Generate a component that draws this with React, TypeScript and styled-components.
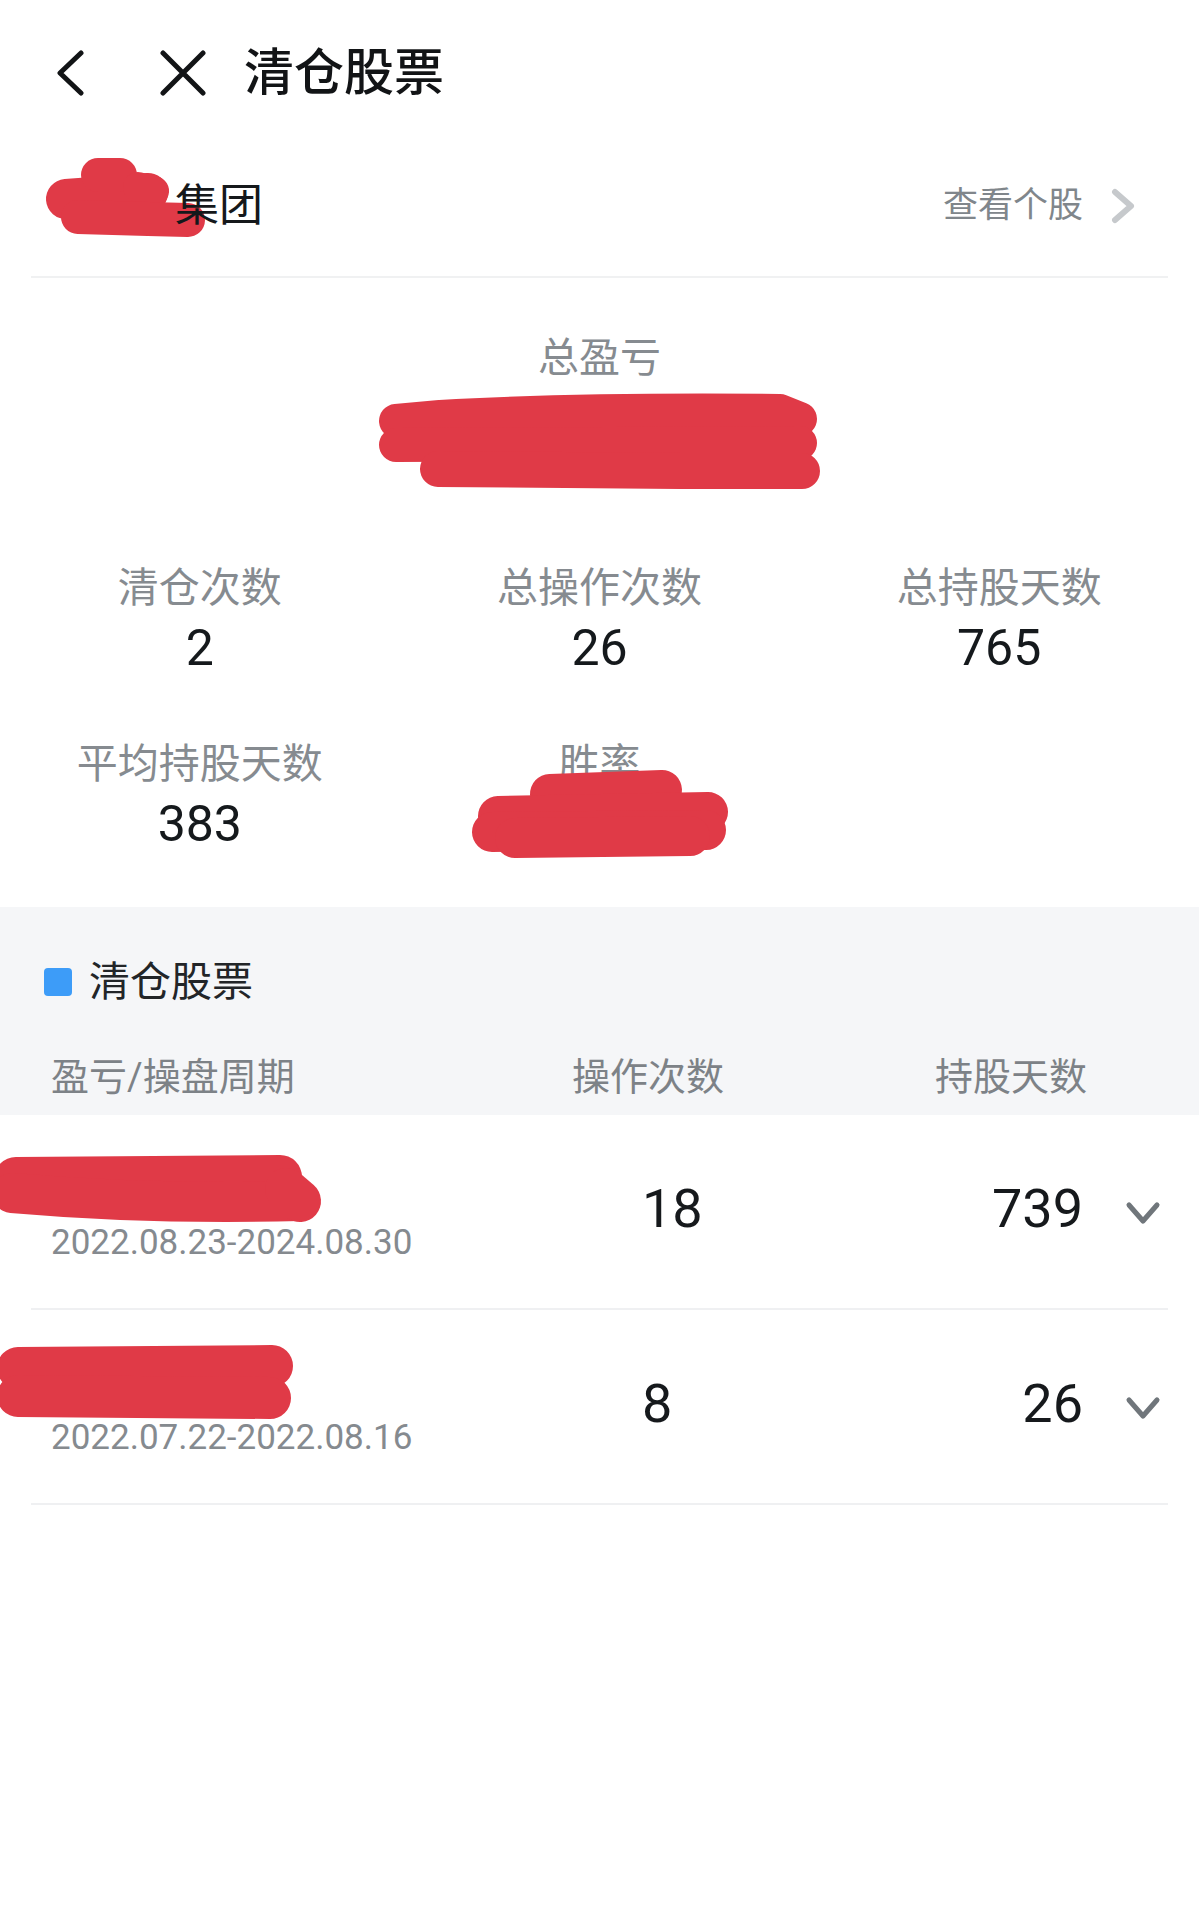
import React from 'react';
import styled, { createGlobalStyle, css } from 'styled-components';

const GlobalStyle = createGlobalStyle`
    html,
    body {
        margin: 0;
        padding: 0;
        background: #ffffff;
    }

    body {
        font-family: Roboto, 'Noto Sans CJK SC', sans-serif;
        color: #16191c;
    }
`;

const REDACT = '#e03a47';

type Stroke = { d: string; w: number };

// hand-drawn red marker used to hide names and amounts
const Scribble = ({
    width,
    height,
    strokes,
    className,
}: {
    width: number;
    height: number;
    strokes: Stroke[];
    className?: string;
}) => (
    <svg
        className={className}
        width={width}
        height={height}
        viewBox={`0 0 ${width} ${height}`}
        fill="none"
    >
        {strokes.map((s, i) => (
            <path
                key={i}
                d={s.d}
                stroke={REDACT}
                strokeWidth={s.w}
                strokeLinecap="round"
                strokeLinejoin="round"
            />
        ))}
    </svg>
);

const Mark = styled(Scribble)<{ $offsetX?: number; $offsetY?: number }>`
    display: block;
    flex-shrink: 0;
    overflow: visible;
    margin-left: ${({ $offsetX }) => $offsetX ?? 0}px;
    margin-top: ${({ $offsetY }) => $offsetY ?? 0}px;
`;

const Page = styled.div`
    width: 1199px;
    min-height: 1918px;
    background: #ffffff;
`;

/* ---------- nav bar ---------- */

const NavBar = styled.header`
    display: flex;
    align-items: center;
    height: 146px;
    padding-left: 56px;
`;

const NavIcon = styled.svg<{ $gap: number }>`
    display: block;
    flex-shrink: 0;
    margin-right: ${({ $gap }) => $gap}px;
`;

const NavTitle = styled.h1`
    margin: 0;
    font-size: 50px;
    line-height: 60px;
    font-weight: 500;
    color: #121416;
`;

/* ---------- company row ---------- */

const CompanyRow = styled.div`
    display: flex;
    align-items: center;
    justify-content: space-between;
    height: 132px;
    box-sizing: border-box;
    margin: 0 31px;
    padding: 0 33px 10px 17px;
    border-bottom: 2px solid #f0f1f2;
`;

const CompanyName = styled.div`
    display: flex;
    align-items: center;
    font-size: 44px;
    line-height: 56px;
    color: #15181b;
`;

const ViewLink = styled.a`
    display: flex;
    align-items: center;
    gap: 28px;
    font-size: 35px;
    line-height: 50px;
    color: #80868b;
    text-decoration: none;
`;

/* ---------- summary ---------- */

const Summary = styled.section`
    display: flex;
    flex-direction: column;
    align-items: center;
    padding: 55px 0 48px;
`;

const labelText = css`
    font-size: 41px;
    line-height: 50px;
    color: #868b90;
`;

const TotalLabel = styled.div`
    ${labelText};
    margin-bottom: 8px;
`;

const StatGrid = styled.div`
    display: grid;
    grid-template-columns: repeat(3, 1fr);
    row-gap: 56px;
    width: 100%;
    margin-top: 74px;
`;

const StatCell = styled.div`
    display: flex;
    flex-direction: column;
    align-items: center;
`;

const StatLabel = styled.div`
    ${labelText};
`;

const StatValue = styled.div`
    height: 70px;
    font-size: 50px;
    line-height: 70px;
    color: #15191c;
`;

/* ---------- closed positions ---------- */

const GraySection = styled.section`
    background: #f5f6f8;
    padding: 50px 0 13px;
`;

const SectionTitle = styled.h2`
    display: flex;
    align-items: center;
    margin: 0;
    padding-left: 44px;
    font-size: 41px;
    line-height: 50px;
    font-weight: 400;
    color: #222528;
`;

const Marker = styled.span`
    width: 28px;
    height: 28px;
    margin-right: 17px;
    border-radius: 4px;
    background: #3d9cf8;
`;

const tableColumns = css`
    display: grid;
    grid-template-columns: 521px 230px 1fr 74px;
    align-items: center;
`;

const TableHead = styled.div`
    ${tableColumns};
    margin-top: 45px;
    padding: 0 38px 0 51px;
    font-size: 38px;
    line-height: 50px;
    color: #7d8287;
`;

const HeadCell = styled.div<{ $align?: 'left' | 'right' }>`
    text-align: ${({ $align }) => $align ?? 'left'};
`;

const RowWrap = styled.div`
    margin: 0 31px;
    border-bottom: 2px solid #eff0f2;
`;

const RowGrid = styled.div`
    ${tableColumns};
    padding: 40px 7px 45px 20px;
`;

const NameCell = styled.div`
    display: flex;
    flex-direction: column;
`;

const NameLine = styled.div`
    height: 68px;
`;

const Period = styled.div`
    font-size: 35px;
    line-height: 40px;
    color: #858a8f;
`;

const Num = styled.div<{ $align: 'left' | 'right' }>`
    font-size: 54px;
    line-height: 64px;
    color: #16191c;
    text-align: ${({ $align }) => $align};
    padding-left: ${({ $align }) => ($align === 'left' ? '70px' : '0')};
    padding-right: ${({ $align }) => ($align === 'right' ? '4px' : '0')};
`;

const Expand = styled.button`
    display: flex;
    justify-content: flex-end;
    align-items: center;
    padding: 8px 0 0;
    border: 0;
    background: none;
`;

const ChevronDown = () => (
    <svg width="36" height="24" viewBox="0 0 36 24" fill="none">
        <polyline
            points="4,4 18,20 32,4"
            stroke="#70767b"
            strokeWidth="5"
            strokeLinecap="round"
            strokeLinejoin="round"
        />
    </svg>
);

const ChevronRight = () => (
    <svg width="24" height="36" viewBox="0 0 24 36" fill="none">
        <polyline
            points="4,4 20,18 4,32"
            stroke="#c6c9cc"
            strokeWidth="6"
            strokeLinecap="round"
            strokeLinejoin="round"
        />
    </svg>
);

const companyMark: Stroke[] = [
    { d: 'M18,42 L100,36', w: 40 },
    { d: 'M50,18 L72,18', w: 34 },
    { d: 'M90,30 L106,34', w: 30 },
    { d: 'M30,60 L100,62 L140,63', w: 34 },
];

const totalMark: Stroke[] = [
    { d: 'M16,30 L60,26 Q200,18 400,20 L420,28', w: 34 },
    { d: 'M16,54 L420,52', w: 34 },
    { d: 'M58,78 L300,80 Q380,80 422,80', w: 36 },
];

const winRateMark: Stroke[] = [
    { d: 'M80,22 L192,18', w: 40 },
    { d: 'M28,44 L238,40', w: 40 },
    { d: 'M22,60 L236,58', w: 40 },
    { d: 'M45,66 L220,64', w: 40 },
];

const rows = [
    {
        period: '2022.08.23-2024.08.30',
        ops: 18,
        days: 739,
        mark: {
            width: 322,
            height: 68,
            offsetY: 0,
            strokes: [
                { d: 'M16,24 L280,22', w: 44 },
                { d: 'M12,38 Q150,50 300,46', w: 40 },
                { d: 'M286,34 L300,46', w: 42 },
            ],
        },
    },
    {
        period: '2022.07.22-2022.08.16',
        ops: 8,
        days: 26,
        mark: {
            width: 297,
            height: 77,
            offsetY: -8,
            strokes: [
                { d: 'M18,26 L272,24', w: 42 },
                { d: 'M18,54 L270,56', w: 42 },
            ],
        },
    },
];

const stats = [
    { label: '清仓次数', value: '2' },
    { label: '总操作次数', value: '26' },
    { label: '总持股天数', value: '765' },
    { label: '平均持股天数', value: '383' },
];

export default function App() {
    return (
        <Page>
            <GlobalStyle />

            <NavBar>
                <NavIcon $gap={72} width="30" height="46" viewBox="0 0 30 46" fill="none">
                    <polyline
                        points="25,3 4,23 25,43"
                        stroke="#121416"
                        strokeWidth="5"
                        strokeLinecap="round"
                        strokeLinejoin="round"
                    />
                </NavIcon>
                <NavIcon $gap={36} width="50" height="46" viewBox="0 0 50 46" fill="none">
                    <path
                        d="M5,3 L45,43 M45,3 L5,43"
                        stroke="#121416"
                        strokeWidth="5"
                        strokeLinecap="round"
                    />
                </NavIcon>
                <NavTitle>清仓股票</NavTitle>
            </NavBar>

            <CompanyRow>
                <CompanyName>
                    <Mark width={127} height={80} strokes={companyMark} $offsetY={-18} />
                    集团
                </CompanyName>
                <ViewLink>
                    查看个股
                    <ChevronRight />
                </ViewLink>
            </CompanyRow>

            <Summary>
                <TotalLabel>总盈亏</TotalLabel>
                <Mark width={440} height={98} strokes={totalMark} />
                <StatGrid>
                    {stats.map((s) => (
                        <StatCell key={s.label}>
                            <StatLabel>{s.label}</StatLabel>
                            <StatValue>{s.value}</StatValue>
                        </StatCell>
                    ))}
                    <StatCell>
                        <StatLabel>胜率</StatLabel>
                        <Mark width={259} height={86} strokes={winRateMark} $offsetY={-17} />
                    </StatCell>
                </StatGrid>
            </Summary>

            <GraySection>
                <SectionTitle>
                    <Marker />
                    清仓股票
                </SectionTitle>
                <TableHead>
                    <HeadCell>盈亏/操盘周期</HeadCell>
                    <HeadCell>操作次数</HeadCell>
                    <HeadCell $align="right">持股天数</HeadCell>
                    <span />
                </TableHead>
            </GraySection>

            {rows.map((r) => (
                <RowWrap key={r.period}>
                    <RowGrid>
                        <NameCell>
                            <NameLine>
                                <Mark
                                    width={r.mark.width}
                                    height={r.mark.height}
                                    strokes={r.mark.strokes}
                                    $offsetX={-51}
                                    $offsetY={r.mark.offsetY}
                                />
                            </NameLine>
                            <Period>{r.period}</Period>
                        </NameCell>
                        <Num $align="left">{r.ops}</Num>
                        <Num $align="right">{r.days}</Num>
                        <Expand>
                            <ChevronDown />
                        </Expand>
                    </RowGrid>
                </RowWrap>
            ))}
        </Page>
    );
}
